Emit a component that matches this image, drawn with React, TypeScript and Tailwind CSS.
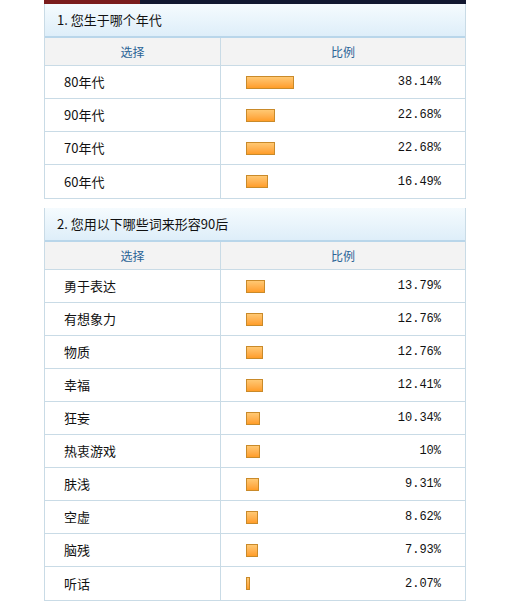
const q1 = [
  { label: "80年代", pct: "38.14%", w: 48 },
  { label: "90年代", pct: "22.68%", w: 29 },
  { label: "70年代", pct: "22.68%", w: 29 },
  { label: "60年代", pct: "16.49%", w: 22 },
];

const q2 = [
  { label: "勇于表达", pct: "13.79%", w: 19 },
  { label: "有想象力", pct: "12.76%", w: 17 },
  { label: "物质", pct: "12.76%", w: 17 },
  { label: "幸福", pct: "12.41%", w: 17 },
  { label: "狂妄", pct: "10.34%", w: 14 },
  { label: "热衷游戏", pct: "10%", w: 14 },
  { label: "肤浅", pct: "9.31%", w: 13 },
  { label: "空虚", pct: "8.62%", w: 12 },
  { label: "脑残", pct: "7.93%", w: 12 },
  { label: "听话", pct: "2.07%", w: 4 },
];

type Item = { label: string; pct: string; w: number };

function Poll({ title, items }: { title: string; items: Item[] }) {
  return (
    <div className="w-[422px] border-x border-b border-[#c9dbe6]">
      <div className="flex h-[34px] items-center border-b-2 border-[#b9d6ea] bg-gradient-to-b from-[#f5fbfe] to-[#deeef9] pl-[12px] text-[13px] text-[#111]">
        {title}
      </div>
      <div className="grid h-[28px] grid-cols-[176px_1fr] border-b border-[#c9dbe6] bg-[#f3f3f3] text-[12px] text-[#2a6496]">
        <div className="flex items-center justify-center border-r border-[#c9dbe6]">选择</div>
        <div className="flex items-center justify-center">比例</div>
      </div>
      {items.map((it, i) => (
        <div
          key={it.label}
          className={
            "grid h-[33px] grid-cols-[176px_1fr] " +
            (i < items.length - 1 ? "border-b border-[#c9dbe6]" : "")
          }
        >
          <div className="flex items-center border-r border-[#c9dbe6] pl-[19px] text-[13px] text-[#111]">
            {it.label}
          </div>
          <div className="flex items-center justify-between pl-[25px] pr-[24px]">
            <div
              className="h-[13px] border border-[#c98a2a] bg-gradient-to-b from-[#ffc872] to-[#ff9d26]"
              style={{ width: it.w }}
            />
            <span className="font-['Liberation_Mono',monospace] text-[12px] text-[#111]">{it.pct}</span>
          </div>
        </div>
      ))}
    </div>
  );
}

export default function App() {
  return (
    <div className="h-[608px] w-[509px] bg-white font-['Noto_Sans_CJK_SC','Noto_Sans',sans-serif]">
      <div className="ml-[44px] flex h-[4px] w-[422px]">
        <div className="w-[96px] bg-[#7a1c1c]" />
        <div className="flex-1 bg-[#121830]" />
      </div>
      <div className="ml-[44px] flex flex-col gap-[9px]">
        <Poll title="1. 您生于哪个年代" items={q1} />
        <Poll title="2. 您用以下哪些词来形容90后" items={q2} />
      </div>
    </div>
  );
}
